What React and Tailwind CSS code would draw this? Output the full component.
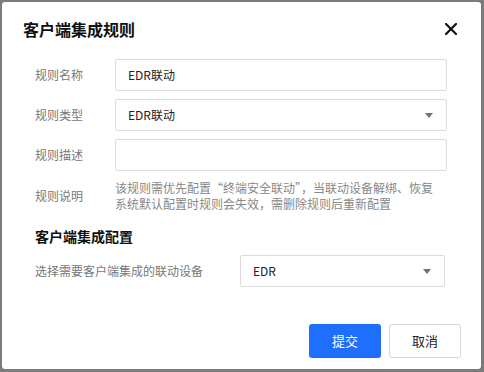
import React from "react";

const font = { fontFamily: '"Noto Sans CJK SC", "Noto Sans", sans-serif' };

function Arrow() {
  return (
    <svg width="8" height="5" viewBox="0 0 8 5" className="shrink-0">
      <path d="M0 0 H8 L4 5 Z" fill="#6b7280" />
    </svg>
  );
}

function Row({ label, children }) {
  return (
    <div className="flex items-center">
      <div className="w-[80px] shrink-0 text-[12px] text-[#777]">{label}</div>
      {children}
    </div>
  );
}

export default function App() {
  return (
    <div
      className="w-[484px] h-[372px] bg-[#7b7b7b] pt-[2px] pl-[2px] pr-[3px] pb-[3px]"
      style={font}
    >
      <div className="w-full h-full bg-white rounded-[3px] flex flex-col">
        <div className="flex items-center justify-between pl-[21px] pr-[24px] pt-[15px] h-[39px]">
          <div className="text-[16px] leading-[24px] font-bold text-[#111]">客户端集成规则</div>
          <svg width="12" height="12" viewBox="0 0 12 12">
            <path d="M1 1 L11 11 M11 1 L1 11" stroke="#111" strokeWidth="2.2" strokeLinecap="square" />
          </svg>
        </div>

        <div className="flex flex-col gap-[8px] pl-[33px] pr-[34px] mt-[18px]">
          <Row label="规则名称">
            <div className="flex-1 h-[32px] border border-[#dcdcdc] rounded-[2px] flex items-center px-[12px] text-[12px] text-[#222]">
              EDR联动
            </div>
          </Row>
          <Row label="规则类型">
            <div className="flex-1 h-[32px] border border-[#dcdcdc] rounded-[2px] flex items-center justify-between pl-[12px] pr-[13px] text-[12px] text-[#222]">
              <span>EDR联动</span>
              <Arrow />
            </div>
          </Row>
          <Row label="规则描述">
            <div className="flex-1 h-[32px] border border-[#dcdcdc] rounded-[2px]" />
          </Row>
          <Row label="规则说明">
            <div className="flex-1 text-[12px] leading-[16px] text-[#888] mt-[1px]">
              该规则需优先配置“终端安全联动”，当联动设备解绑、恢复
              <br />
              系统默认配置时规则会失效，需删除规则后重新配置
            </div>
          </Row>
        </div>

        <div className="pl-[33px] mt-[14px] text-[14px] leading-[20px] font-bold text-[#111]">客户端集成配置</div>

        <div className="flex items-center pl-[33px] mt-[9px]">
          <div className="w-[205px] shrink-0 text-[12px] text-[#777]">选择需要客户端集成的联动设备</div>
          <div className="w-[205px] h-[32px] border border-[#dcdcdc] rounded-[2px] flex items-center justify-between pl-[12px] pr-[13px] text-[12px] text-[#222]">
            <span>EDR</span>
            <Arrow />
          </div>
        </div>

        <div className="flex justify-end gap-[8px] pr-[20px] mt-[37px]">
          <button className="w-[72px] h-[34px] rounded-[3px] bg-[#1f6fff] text-white text-[13px]">提交</button>
          <button className="w-[72px] h-[34px] rounded-[3px] border border-[#d6d6d6] bg-white text-[#222] text-[13px]">取消</button>
        </div>
      </div>
    </div>
  );
}
